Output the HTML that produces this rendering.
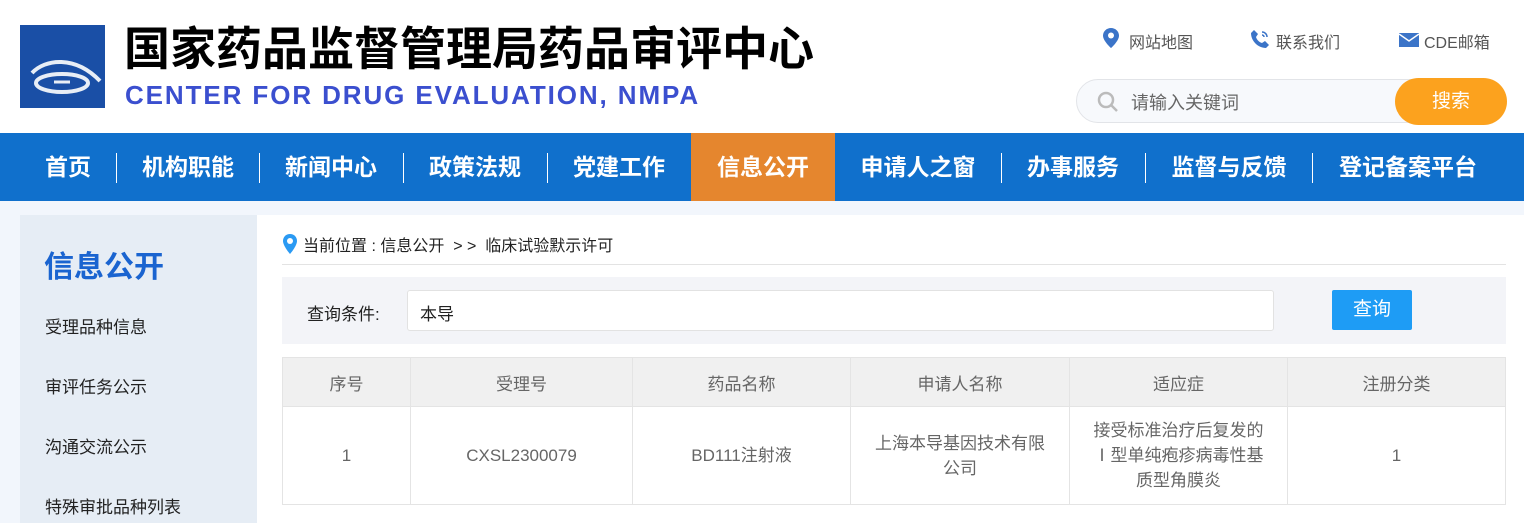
<!DOCTYPE html>
<html><head><meta charset="utf-8"><style>
*{margin:0;padding:0;box-sizing:border-box}
body{width:1524px;height:523px;overflow:hidden;background:#fff;font-family:"Liberation Sans","Noto Sans CJK SC",sans-serif;position:relative}
.a{position:absolute;white-space:nowrap}
.nav{position:absolute;left:0;top:133px;width:1524px;height:68px;background:#1070cc}
.ni{position:absolute;top:0;height:68px;line-height:68px;color:#fff;font-size:23px;font-weight:bold;text-align:center}
.sep{position:absolute;top:20px;width:1px;height:30px;background:#fff}
table{position:absolute;left:282px;top:357px;width:1224px;border-collapse:collapse;font-size:17px;color:#666}
td,th{border:1px solid #e4e4e4;text-align:center;font-weight:normal}
th{background:#f0f0f0;height:49px}
td{height:98px;line-height:25px}
.si{position:absolute;left:45px;font-size:17px;color:#222}
</style></head><body>
<div class="a" style="left:20px;top:25px;width:85px;height:83px;background:#1a4fa6;overflow:hidden">
<svg width="85" height="83" viewBox="0 0 85 83"><path d="M12 48 C25 34 55 30 80 56" stroke="#e8eef6" stroke-width="4" fill="none"/><ellipse cx="42" cy="58" rx="26" ry="9" stroke="#e8eef6" stroke-width="4" fill="none"/><path d="M34 57 h16" stroke="#e8eef6" stroke-width="3"/></svg></div>
<div class="a" style="left:124px;top:18px;font-size:46px;font-weight:bold;color:#000;font-family:'Noto Sans CJK SC',sans-serif;line-height:56px">国家药品监督管理局药品审评中心</div>
<div class="a" style="left:125px;top:79px;font-size:26px;font-weight:bold;color:#3b4fcf;letter-spacing:1.9px;line-height:32px">CENTER FOR DRUG EVALUATION, NMPA</div>
<svg class="a" style="left:1103px;top:28px" width="16" height="20" viewBox="0 0 16 20"><path d="M8 0C3.6 0 0 3.4 0 7.6 0 13 8 20 8 20s8-7 8-12.4C16 3.4 12.4 0 8 0z" fill="#3b74c8"/><circle cx="8" cy="7.5" r="3" fill="#fff"/></svg>
<div class="a" style="left:1129px;top:29px;font-size:16px;color:#555">网站地图</div>
<svg class="a" style="left:1250px;top:29px" width="20" height="20" viewBox="0 0 20 20"><path d="M4 1 L8 5 L6 8 C7 11 9 13 12 14 L15 12 L19 16 L16 19 C8 19 1 12 1 4z" fill="#3b74c8"/><path d="M12 3a5 5 0 0 1 5 5M12 6a2 2 0 0 1 2 2" stroke="#3b74c8" stroke-width="1.5" fill="none"/></svg>
<div class="a" style="left:1276px;top:29px;font-size:16px;color:#555">联系我们</div>
<svg class="a" style="left:1399px;top:33px" width="20" height="14" viewBox="0 0 20 14"><rect width="20" height="14" fill="#3b74c8"/><path d="M0 1 L10 8 L20 1" stroke="#fff" stroke-width="1.5" fill="none"/></svg>
<div class="a" style="left:1424px;top:29px;font-size:16px;color:#555">CDE邮箱</div>
<div class="a" style="left:1076px;top:79px;width:420px;height:44px;border:1px solid #e2e4e8;border-radius:22px;background:#f7f9fc"></div>
<svg class="a" style="left:1096px;top:90px" width="24" height="24" viewBox="0 0 24 24"><circle cx="10" cy="10" r="7" stroke="#bbb" stroke-width="2.5" fill="none"/><path d="M15 15l6 6" stroke="#bbb" stroke-width="2.5"/></svg>
<div class="a" style="left:1131px;top:89px;font-size:18px;color:#666">请输入关键词</div>
<div class="a" style="left:1395px;top:78px;width:112px;height:47px;border-radius:24px;background:#fca21e;color:#fff;font-size:19px;text-align:center;line-height:47px">搜索</div>
<div class="nav">
<div class="ni" style="left:22px;width:92px">首页</div><div class="sep" style="left:116px"></div>
<div class="ni" style="left:118px;width:140px">机构职能</div><div class="sep" style="left:259px"></div>
<div class="ni" style="left:260px;width:142px">新闻中心</div><div class="sep" style="left:403px"></div>
<div class="ni" style="left:404px;width:142px">政策法规</div><div class="sep" style="left:547px"></div>
<div class="ni" style="left:548px;width:142px">党建工作</div>
<div class="ni" style="left:691px;width:144px;background:#e5862e">信息公开</div>
<div class="ni" style="left:836px;width:164px">申请人之窗</div><div class="sep" style="left:1001px"></div>
<div class="ni" style="left:1002px;width:142px">办事服务</div><div class="sep" style="left:1145px"></div>
<div class="ni" style="left:1146px;width:166px">监督与反馈</div><div class="sep" style="left:1312px"></div>
<div class="ni" style="left:1313px;width:190px">登记备案平台</div>
</div>
<div class="a" style="left:0;top:201px;width:1524px;height:322px;background:#f2f6fc"></div>
<div class="a" style="left:20px;top:215px;width:237px;height:308px;background:#e6edf5"></div>
<div class="a" style="left:257px;top:215px;width:1267px;height:308px;background:#fff"></div>
<div class="a" style="left:44px;top:242px;font-size:30px;font-weight:bold;color:#1a64d0">信息公开</div>
<div class="si" style="top:313px">受理品种信息</div>
<div class="si" style="top:373px">审评任务公示</div>
<div class="si" style="top:433px">沟通交流公示</div>
<div class="si" style="top:493px">特殊审批品种列表</div>
<svg class="a" style="left:283px;top:234px" width="14" height="20" viewBox="0 0 14 20"><path d="M7 0C3 0 0 3 0 7c0 5 7 13 7 13s7-8 7-13C14 3 11 0 7 0z" fill="#2b9af3"/><circle cx="7" cy="7" r="3" fill="#fff"/></svg>
<div class="a" style="left:303px;top:232px;font-size:16px;color:#222">当前位置 : 信息公开 &nbsp;&gt; &gt; &nbsp;临床试验默示许可</div>
<div class="a" style="left:282px;top:264px;width:1224px;height:1px;background:#e3e3e3"></div>
<div class="a" style="left:282px;top:277px;width:1224px;height:67px;background:#f3f4f8"></div>
<div class="a" style="left:307px;top:300px;font-size:17px;color:#222">查询条件:</div>
<div class="a" style="left:407px;top:290px;width:867px;height:41px;background:#fff;border:1px solid #e2e2e2;border-radius:3px"></div>
<div class="a" style="left:420px;top:300px;font-size:17px;color:#222">本导</div>
<div class="a" style="left:1332px;top:290px;width:80px;height:40px;background:#1e9cf5;border-radius:2px;color:#fff;font-size:19px;text-align:center;line-height:40px">查询</div>
<table>
<tr><th style="width:128px">序号</th><th style="width:222px">受理号</th><th style="width:218px">药品名称</th><th style="width:219px">申请人名称</th><th style="width:218px">适应症</th><th>注册分类</th></tr>
<tr><td>1</td><td>CXSL2300079</td><td>BD111注射液</td><td>上海本导基因技术有限<br>公司</td><td>接受标准治疗后复发的<br>Ⅰ型单纯疱疹病毒性基<br>质型角膜炎</td><td>1</td></tr>
</table>
</body></html>
